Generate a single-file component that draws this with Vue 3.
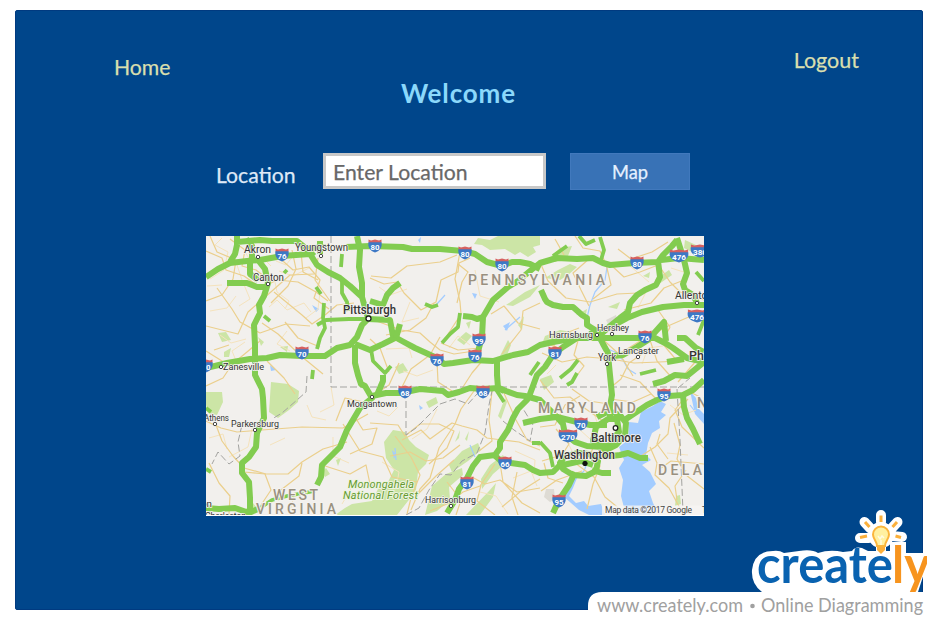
<script setup>
import { ref } from 'vue'

const location = ref('')

const parks = [
  'M474 244L478 238 490 240 498 236 540 236 540 245 533 247 536 252 528 257 520 252 515 255 505 249 490 250 482 245Z',
  'M560 248L572 246 568 256 556 262 545 262Z M545 278L558 270 570 264 577 267 568 275 560 280Z M545 336L560 330 572 332 556 342 542 344Z',
  'M206 392L222 392 223 402 217 415 208 413 206 405Z',
  'M271 382L288 384 299 391 298 402 289 410 278 418 269 412Z',
  'M393 430L405 432 409 440 416 447 429 455 426 464 418 472 416 490 408 501 397 515 335 515 345 508 352 504 372 501 378 489 387 484 394 470 386 458 384 442Z',
  'M449 465L462 451 478 443 481 450 468 461 452 472Z M481 479L490 465 503 455 507 462 493 474 482 489Z',
  'M425 515L432 486 446 474 462 468 463 475 449 487 450 500 437 511Z M466 515L489 491 496 483 493 497 480 515Z',
  'M426 402L436 397 438 403 429 408Z M498 416L505 398 507 402 501 419Z M455 442L460 430 459 438Z M465 439L469 431 467 441Z',
  'M218 333L226 332 231 340 222 342Z M258 337L264 342 261 346Z M224 352L231 348 229 357 224 357Z M280 347L288 346 287 352Z',
  'M457 340L466 332 472 336 464 345Z M395 367L403 363 408 371 399 374Z M466 323L471 321 469 329Z',
  'M500 356L508 340 511 345 505 360Z M506 305L525 292 540 285 530 297 513 306Z M518 325L524 316 522 330Z',
  'M676 496L680 495 681 504 675 506Z M540 379L551 375 554 382 544 390Z M685 240L696 245 692 252 684 248Z',
  'M655 280L669 270 672 275 659 284Z M576 315L587 309 586 314Z M608 307L620 302 617 309Z M643 276L650 272 649 278Z',
  'M242 512L253 503 260 512Z M322 472L326 468 330 474 325 477Z M336 460L341 458 338 466Z',
]

const water = [
  'M660 401L666 404 661 412 666 415 659 421 660 428 652 433 648 443 646 455 651 460 642 465 650 472 656 484 649 491 653 503 657 511 650 515 626 515 621 496 623 480 619 468 624 460 619 447 628 440 629 422 638 423 641 412 653 406Z',
  'M569 481L577 478 573 488 569 496 576 503 584 501 588 506 601 504 605 515 589 515 579 510 563 496Z',
  'M690 391L696 398 698 408 704 414 704 424 695 414Z',
  'M312 305L319 309 316 312Z M503 326L510 322 507 331Z M472 293L477 294 475 299Z M419 405L423 408 420 410Z',
  'M392 450L396 454 394 459Z M270 365L276 370 271 371Z M418 240L421 237 420 243Z',
]

const streams = [
  'M607 267L605 280 595 292 590 305 587 318 598 340 605 348 615 352 623 360 628 369 636 374',
  'M704 421L697 414 690 405 M571 483L584 471 586 466 M640 466L625 456 M664 394L653 404',
  'M505 330L520 317 M437 304L445 295 M470 445L475 457 M395 448L396 460',
]

const minorRoads = [
  'M206 251L222 258 226 270 244 276 261 288 277 280 298 282 316 292 328 301',
  'M210 236L217 252 236 260 233 279 222 295 206 301 M217 288L232 309 240 322 260 333 286 324 310 326',
  'M206 326L238 334 248 312 272 291 290 275 314 274 M230 239L245 250 242 266 256 270 269 280',
  'M274 292L302 315 312 324 325 315 337 305 354 303 M285 322L298 338 320 347',
  'M275 254L293 270 309 267 320 280 314 298 329 309 M292 250L296 269 288 286 271 303',
  'M301 252L303 272 318 280 M318 258L315 280 330 301 M214 350L229 345 M206 351L230 366 247 352 260 341',
  'M262 323L278 334 301 356 323 374 M267 361L284 378 295 394 M231 366L223 378 206 386',
  'M206 421L221 428 237 432 262 430 302 427 343 428 368 414',
  'M216 425L222 441 233 456 244 468 266 474 288 474 302 462 323 449 347 442',
  'M244 472L265 474 271 490 261 505 M209 463L219 483 230 496 229 514 M302 463L299 476 277 493',
  'M347 428L355 417 363 430 377 428 372 444 350 454 M322 465L350 474 366 465 370 484 382 490',
  'M336 421L345 398 364 402 M343 424L360 451 383 457 392 477 417 482',
  'M370 278L384 284 397 282 404 293 421 310 436 302 441 280 458 272 459 263 470 258',
  'M371 319L401 330 420 333 430 342 440 350 454 354 481 350 M386 335L410 330 426 318 434 303',
  'M460 252L455 279 460 302 461 314 443 342 M371 276L391 278 407 266 440 262 457 255',
  'M458 264L468 272 462 282 457 303 M491 314L504 306 518 323 540 329 M540 303L523 311 521 330 502 354',
  'M441 343L458 350 480 348 M402 387L411 369 430 355 440 337 M370 339L380 348 389 372',
  'M399 363L389 385 374 395 M437 361L438 382 452 391 M483 360L472 373 461 390',
  'M370 423L398 425 405 436 420 424 439 424 454 431 447 448 429 464',
  'M402 440L421 430 430 439 452 423 462 426 477 430 487 438 502 440 519 442 540 450',
  'M395 436L411 457 420 475 411 498 407 514 M390 456L410 452 426 461 443 458 460 445',
  'M474 391L461 409 455 424 439 448 430 478 420 489 411 510 M402 497L418 494 436 476 454 460',
  'M492 391L489 420 492 441 479 451 M503 391L516 420 527 440 540 446 M540 479L521 491 502 507',
  'M447 482L461 500 456 515 M470 476L485 484 500 480 517 492 540 488 M500 463L503 482 522 503 540 513',
  'M430 511L447 504 463 492 480 486 495 464 M481 485L477 501 495 515 M517 472L512 497 518 515',
  'M540 262L548 281 566 298 590 302 617 294 638 293 M575 236L583 248 600 251 606 264 611 285 593 299',
  'M589 306L581 290 573 273 590 258 M555 239L564 255 M618 249L631 259 652 252 668 242',
  'M612 266L624 277 640 272 658 265 M660 267L670 282 680 292 704 300 M624 310L651 303 664 288 684 280',
  'M579 337L574 355 584 366 578 374 M579 328L561 335 553 347 M598 335L621 356 633 376',
  'M542 353L562 362 587 357 611 359 634 363 659 362 680 361 M658 310L670 327 662 343 678 362',
  'M619 354L640 341 668 326 691 316 M650 340L657 361 673 379 M642 354L629 363 621 379 610 388',
  'M542 342L559 348 573 342 M540 380L554 398 570 397 583 407 603 421 M540 427L555 425 565 405 580 396',
  'M572 389L589 401 609 404 M610 399L633 402 651 394 M620 375L640 382 657 400',
  'M542 461L562 455 569 444 556 429 M544 463L548 478 563 483 M541 491L557 480 582 471',
  'M575 463L594 477 605 497 621 510 M596 439L590 456 600 466 593 484 587 509',
  'M641 456L655 447 668 434 670 418 688 399 M650 447L657 463 655 475 669 488 681 510',
  'M668 459L657 444 660 434 M674 423L680 445 677 459 686 475 704 489 M661 468L671 461 704 464',
  'M684 398L675 410 682 427 704 448 M690 392L700 397 M678 382L696 361 M686 470L675 486 677 500',
]

const detailRoads = [
  'M222 238L215 245 228 252 224 270 210 279 M237 265L242 280 250 299 239 306 M245 252L252 263 262 257 271 266',
  'M276 261L286 265 294 255 M279 271L293 276 309 268 M274 277L277 292 289 301 285 309',
  'M269 307L277 300 287 310 304 303 311 312 M287 331L277 344 290 351 M220 335L231 343 246 339',
  'M207 286L222 285 M210 311L227 308 236 296 M245 342L232 351 237 363 M306 318L318 309 320 292',
  'M209 438L223 434 227 449 M229 457L248 447 253 424 M270 445L285 438 M307 405L312 417 326 420',
  'M320 412L334 405 331 387 M333 437L333 456 349 463 M352 487L342 504 M294 496L290 511',
  'M379 287L390 295 407 289 M410 302L402 322 419 318 M475 270L480 296 499 302',
  'M433 370L417 376 403 371 M449 348L458 336 470 345 M386 349L409 348 412 358',
  'M377 411L389 416 398 407 M437 409L427 429 412 439 M382 462L399 472 396 488',
  'M515 451L535 460 534 475 M513 478L531 471 537 486 M480 492L496 496 508 514',
  'M630 266L649 282 M646 292L638 308 M671 268L690 274 M663 346L648 348 642 364 M556 365L547 374',
  'M670 405L683 415 696 410 M667 453L688 455 M569 445L573 453 M579 429L590 439 M593 411L599 427',
]

const highways = [
  'M206 277L218 269 230 263 247 261 260 260 282 256 310 254 317 265 328 272 340 278 350 286 362 297 368 318',
  'M237 236L237 245 235 254 230 262 M237 242L260 240 272 241 297 241 308 250 314 256',
  'M305 249L326 247 M346 247L370 246 403 247 412 249 440 249 463 251 475 254 487 262 502 266 512 262 520 262 530 264 540 269',
  'M227 283L247 283 257 287 267 287 M250 261L250 274 258 280',
  'M258 260L265 269 268 283 264 296 259 305 260 313 254 325 255 345 255 375 262 389 263 398 264 418 257 433 256 447 249 457 242 463 242 473 249 482 250 498 250 514',
  'M357 236L360 250 359 267 362 283 362 297 M320 241L320 254 M246 239L252 246 252 260',
  'M206 368L227 363 250 359 267 358 280 355 301 356 317 356 325 356 337 348 350 345 357 337 362 325 368 319',
  'M355 345L355 354 355 363 358 375 361 384 365 386 372 398 360 408 347 430 340 447 329 458 322 465 321 477 317 485',
  'M355 344L370 350 383 344 395 338 M368 319L390 320 393 336 402 341 415 348 437 358 444 364 453 363 473 360 493 361 513 355 528 352 540 345 553 342 577 338 637 338 655 338 665 343 673 348 687 358 704 362',
  'M370 301L383 305 387 295 393 288 400 283 M396 338L400 324',
  'M477 355L482 337 483 317 493 300 508 287 518 281 530 271 540 263 557 258 577 259 593 258 603 263 610 265 634 263 658 262 663 255 672 246 677 240 M661 260L679 258 704 260',
  'M463 316L472 317 477 319 484 317',
  'M658 261L660 277 656 285 645 290 637 295 630 303 628 312 620 318 610 326 600 335',
  'M589 334L600 333 614 325 627 318 642 312 663 307 684 305 704 305',
  'M541 290L545 299 547 302 553 305 563 307 573 307 582 315 587 318 587 325 600 333',
  'M677 238L684 260 687 273 683 284 685 290 693 295 697 303',
  'M600 338L603 344 608 353 609 365 610 375 612 395 610 406 610 418',
  'M608 359L614 356 623 355 637 347 648 340 664 322 666 341 M677 338L685 338 696 348 704 352 M667 362L684 359',
  'M600 334L577 338 563 347 553 355 545 367 537 375 530 394 527 400 518 409 513 418 508 430 500 442 500 448 495 455 480 457 473 466 467 478 459 489 455 500 447 513',
  'M372 396L386 393 401 393 420 389 443 391 448 395 459 392 470 388 482 389 499 388 506 391 517 395 525 396 540 400 557 417',
  'M377 395L383 381 383 375 M497 361L497 375 498 388 504 391',
  'M493 454L501 461 511 463 525 465 533 470 540 473 553 472 562 463',
  'M523 423L540 419 557 417 573 421 590 425 607 425 M556 416L563 424 565 434 575 442 587 446 603 447',
  'M597 417L609 411 620 415 626 423 625 435 616 445 602 446 593 441 596 427 608 419 617 419 619 432 610 442',
  'M616 445L600 453 592 461 M626 419L638 411 647 405 657 400 669 396 683 395 693 390 704 380',
  'M683 395L684 407 687 418 693 429 700 444 M653 384L664 381 675 375 687 376 704 362',
  'M597 456L611 456 620 455 628 453 640 458 648 458 M592 470L602 473 611 473',
  'M564 457L577 453 589 454 598 461 596 471 586 476 573 475 563 469 560 463Z M575 472L569 485 559 500 553 513 M563 465L581 461 593 465',
  'M206 508L219 509 235 508 249 513 260 508',
]

const connectors = [
  'M260 508L272 500 287 496 315 491 M317 325L326 320 349 319 367 319 M324 303L323 318 325 328 320 338 317 349 M313 370L312 379',
  'M342 254L341 267 M342 280L342 293 347 302 348 311 M560 378L571 369 578 360 M640 374L656 370',
  'M460 313L458 327 450 334 442 343 M425 304L432 307 438 305 M371 349L373 361 385 373 391 366',
  'M206 408L211 412 M206 469L211 472 M316 287L321 294 M264 316L270 321 M284 273L287 270 M553 256L567 246 M579 236L586 244 595 240',
  'M530 375L539 362 M540 442L550 453 553 467 M704 281L696 272 M704 320L698 335',
  'M495 388L504 402 M567 385L572 382 577 373 M532 443L540 443 M600 237L604 250 601 260',
]

const borders = [
  'M331 236V387H704', 'M406 391V435L416 428 430 414 440 404 455 399 468 404 477 394',
  'M307 376L306 392 297 400 282 413 272 419', 'M242 425L238 442 240 456 229 464 218 452 212 464',
  'M406 515L419 508 429 490 440 474 451 475 462 461 477 453 485 433 489 405 492 391',
  'M503 421L514 430 530 441 533 425 522 407', 'M677 389L680 440 683 512', 'M678 388L690 378',
]

const shields = [
  [282, 255, '76'], [375, 246, '80'], [465, 253, '80'], [502, 265, '80'], [637, 263, '80'],
  [679, 256, '476'], [700, 251, '380'], [302, 353, '70'], [206, 366, '70'], [479, 340, '99'],
  [475, 356, '76'], [437, 360, '76'], [645, 337, '76'], [555, 353, '81'], [697, 316, '476'],
  [405, 392, '68'], [483, 392, '68'], [505, 463, '66'], [467, 483, '81'], [581, 424, '70'],
  [568, 436, '270'], [664, 395, '95'], [559, 501, '95'],
].map(([x, y, label]) => ({ x, y, label, stretch: label.length > 2 ? 1.4 : 1 }))

const cities = [
  [244, 253, 27, 'Akron', 10], [295, 251, 53, 'Youngstown', 10], [253, 281, 31, 'Canton', 10],
  [223, 370, 41, 'Zanesville', 9.5], [204, 421, 25, 'Athens', 9], [231, 427, 48, 'Parkersburg', 9],
  [347, 407, 50, 'Morgantown', 9.5], [425, 503, 51, 'Harrisonburg', 9.5], [549, 338, 44, 'Harrisburg', 9.5],
  [597, 331, 32, 'Hershey', 9], [618, 354, 41, 'Lancaster', 9.5], [598, 361, 18, 'York', 10],
  [675, 299, 46, 'Allentown', 10.5], [205, 519, 41, 'Charleston', 9], [198, 507, 14, 'ton', 9],
]
const majorCities = [
  [343, 314, 53, 'Pittsburgh'], [591, 442, 50, 'Baltimore'], [554, 459, 61, 'Washington'], [689, 360, 68, 'Philadelphia'],
]
const regions = [
  [468, 285, 137, 'PENNSYLVANIA'], [538, 413, 98, 'MARYLAND'], [273, 500, 45, 'WEST'],
  [256, 514, 80, 'VIRGINIA'], [658, 475, 95, 'DELAWARE'], [697, 408, 55, 'NEW J'],
]
const markers = [[258, 257], [321, 256], [268, 284], [221, 367], [215, 424], [255, 430], [372, 397], [451, 506], [597, 335], [612, 334], [638, 357], [607, 364], [697, 303]]
</script>

<template>
  <main class="page">
    <section class="panel">
      <header class="header">
        <a class="nav home">Home</a>
        <h1 class="title">Welcome</h1>
        <a class="nav logout">Logout</a>
      </header>

      <form class="search" @submit.prevent>
        <label class="label" for="location">Location</label>
        <input id="location" v-model="location" class="field" placeholder="Enter Location" />
        <button class="map-button" type="submit">Map</button>
      </form>

      <svg class="map" viewBox="206 236 498 280">
        <rect class="land" x="206" y="236" width="498" height="280" />
        <path v-for="d in parks" :key="d" class="park" :d="d" />
        <path v-for="d in water" :key="d" class="water" :d="d" />
        <path v-for="d in streams" :key="d" class="stream" :d="d" />
        <path class="urban" d="M546 489L554 489 555 499 550 502 544 497Z M606 320L616 315 617 319 608 324Z" />
        <path v-for="d in detailRoads" :key="d" class="detail" :d="d" />
        <path v-for="d in minorRoads" :key="d" class="minor" :d="d" />
        <path v-for="d in borders" :key="d" class="border" :d="d" />
        <path v-for="d in connectors" :key="d" class="connector" :d="d" />
        <path v-for="d in highways" :key="d" class="highway" :d="d" />

        <g v-for="(s, i) in shields" :key="i" :transform="`translate(${s.x} ${s.y}) scale(${s.stretch} 1)`">
          <path class="shield-body" d="M-6.5-4H6.5C7.5 1 5 5 0 6.5C-5 5-7.5 1-6.5-4Z" />
          <path class="shield-top" d="M-6.5-6.5L-4-5.5 0-6.5 4-5.5 6.5-6.5V-3.800H-6.5Z" />
          <text class="shield-text" y="3.6" :textLength="s.stretch > 1 ? 10 : 9" lengthAdjust="spacingAndGlyphs">{{ s.label }}</text>
        </g>

        <text v-for="[x, y, w, name] in regions" :key="name" class="region" :x="x" :y="y" :textLength="w">{{ name }}</text>
        <text class="forest" x="348" y="488" textLength="66">Monongahela</text>
        <text class="forest" x="343" y="499" textLength="75">National Forest</text>
        <circle v-for="([x, y], i) in markers" :key="i" class="marker" :cx="x" :cy="y" r="1.7" />
        <circle class="marker major" cx="368.5" cy="318.5" r="2.5" />
        <circle class="marker major" cx="615.5" cy="428" r="2.3" />
        <circle class="marker capital" cx="585" cy="463.5" r="2.2" />
        <text v-for="[x, y, w, name, size] in cities" :key="name" class="city" :x="x" :y="y" :textLength="w" lengthAdjust="spacingAndGlyphs" :font-size="size">{{ name }}</text>
        <text v-for="[x, y, w, name] in majorCities" :key="name" class="major-city" :x="x" :y="y" :textLength="w" lengthAdjust="spacingAndGlyphs">{{ name }}</text>
        <rect class="credit-bg" x="602" y="505.5" width="102" height="10.5" />
        <text class="credit" x="605" y="513" textLength="87">Map data ©2017 Google</text>
        <text class="credit" x="702" y="513">T</text>
        <rect class="edge" x="206" y="515" width="498" height="1" />
      </svg>
    </section>

    <footer class="brand">
      <svg viewBox="580 500 347 119" width="347" height="119">
        <path class="halo" d="M588 619V606Q588 592 602 592H762Q751 584 752 570Q754 551 773 551Q779 550 784 553L799 551Q812 549 818 553Q830 549 843 552L852 551Q855 546 862 548L868 551H890V542H906V553H927V564L918 592H923V619Z" />
        <g class="halo-strokes">
          <path d="M881 515V522M864.500 522L870 528M897.500 522L892 528M860 538H869M902 537L892 536" />
          <circle cx="881" cy="535" r="8" />
          <path d="M881 540V552" />
        </g>
        <text class="wordmark blue" x="757" y="583" textLength="136" lengthAdjust="spacingAndGlyphs">create</text>
        <text class="wordmark orange" x="892" y="583" textLength="38" lengthAdjust="spacingAndGlyphs">ly</text>
        <path class="rays" d="M881 515.500V522M865 522L869.500 527M897 522L892.500 527M860 537.500L867 536M895.500 536L901 537.500" />
        <path class="bulb" d="M877 546C877 541 873 539 873 534.500A8 8 0 0 1 889 534.500C889 539 885 541 885 546Z" />
        <path class="filament" d="M878 536L880 539 882 536 884 538M881 540V545" />
        <path class="bulb-base" d="M877 547H885V550L881 554 877 550Z" />
        <text class="tagline" x="597" y="612" textLength="146" lengthAdjust="spacingAndGlyphs">www.creately.com</text>
        <circle class="dot" cx="752.500" cy="606" r="2.300" />
        <text class="tagline" x="761" y="612" textLength="162" lengthAdjust="spacingAndGlyphs">Online Diagramming</text>
      </svg>
    </footer>
  </main>
</template>

<style>
body {
  margin: 0;
  background: #fff;
}
</style>

<style scoped>
.page {
  position: relative;
  box-sizing: border-box;
  width: 927px;
  height: 619px;
  padding: 10px 4px 9px 15px;
  overflow: hidden;
  background: #fff;
  font-family: Lato, "Open Sans", sans-serif;
}
.panel {
  box-sizing: border-box;
  height: 600px;
  border: 1px solid #003a80;
  border-radius: 2px;
  background: #00468b;
}
.header {
  display: grid;
  grid-template-columns: 200px 1fr 200px;
  box-sizing: border-box;
  height: 142px;
  padding: 37px 63px 0 98px;
  align-items: start;
}
.nav {
  color: #d9dfae;
  font-size: 21.5px;
  line-height: 24px;
  -webkit-text-stroke: 0.25px #d9dfae;
}
.home {
  margin-top: 7px;
  font-size: 21.2px;
}
.logout {
  text-align: right;
}
.title {
  margin: 29px 0 0 -56px;
  color: #8bd8fb;
  font-size: 26px;
  font-weight: 700;
  letter-spacing: 0.85px;
  line-height: 32px;
  text-align: center;
}
.search {
  display: flex;
  align-items: flex-start;
  height: 83px;
  padding-left: 200px;
}
.label {
  width: 107px;
  padding-top: 8px;
  color: #dfe9f7;
  font-size: 21.2px;
  line-height: 28px;
  -webkit-text-stroke: 0.25px #dfe9f7;
}
.field {
  box-sizing: border-box;
  width: 223px;
  height: 36px;
  margin-right: 24px;
  padding: 1px 7px 0;
  border: 3px solid #c8c8c8;
  background: #fff;
  color: #666;
  font: 21.2px Lato, sans-serif;
}
.field::placeholder {
  color: #686868;
  opacity: 1;
  -webkit-text-stroke: 0.25px #686868;
}
.map-button {
  width: 120px;
  height: 37px;
  padding: 0;
  border: 1px solid #4179bd;
  background: #3872b6;
  color: #e5f0ff;
  font: 18.3px Lato, sans-serif;
  -webkit-text-stroke: 0.25px #e5f0ff;
}
.map {
  display: block;
  width: 498px;
  height: 280px;
  margin-left: 190px;
  font-family: Roboto, sans-serif;
}
.land { fill: #f2f0ed; }
.park { fill: #cce5a6; }
.water { fill: #a3ccff; }
.urban { fill: #dedbd4; }
.stream, .detail, .minor, .border, .connector, .highway {
  fill: none;
  stroke-linejoin: round;
}
.stream { stroke: #a3ccff; stroke-width: 1.2; }
.detail { stroke: #f5e3bd; stroke-width: 1; }
.minor { stroke: #ebcf8c; stroke-width: 1.2; }
.border { stroke: #a3a3a0; stroke-width: 1; stroke-dasharray: 7 3; }
.connector { stroke: #82cc50; stroke-width: 3.8; }
.highway { stroke: #82cc50; stroke-width: 6; }
.shield-body { fill: #3d78c5; }
.shield-top { fill: #d66060; }
.shield-text {
  fill: #fff;
  font-size: 8px;
  font-weight: 700;
  text-anchor: middle;
}
.region {
  fill: #999080;
  stroke: #f5f3ef;
  stroke-width: 2;
  paint-order: stroke;
  font-size: 14px;
  font-weight: 500;
}
.forest {
  fill: #659b31;
  stroke: #edf4df;
  stroke-width: 2;
  paint-order: stroke;
  font-size: 11px;
  font-style: italic;
}
.city, .major-city {
  fill: #333;
  stroke: #f5f3ef;
  stroke-width: 1.5;
  paint-order: stroke;
}
.major-city {
  font-size: 12px;
  font-weight: 500;
}
.marker { fill: #fff; stroke: #444; stroke-width: 1; }
.major { stroke: #222; stroke-width: 1.3; }
.capital { fill: #111; stroke: #111; }
.credit-bg { fill: #f6f5f2; opacity: .8; }
.credit { fill: #444; font-size: 8.5px; }
.edge { fill: #fff; }
.brand {
  position: absolute;
  right: 0;
  bottom: 0;
  width: 347px;
  height: 119px;
}
.brand svg { display: block; }
.halo { fill: #fff; }
.halo-strokes { fill: #fff; stroke: #fff; stroke-width: 10; stroke-linecap: round; }
.wordmark { font-size: 52px; font-weight: 700; }
.blue { fill: #0962b0; }
.orange { fill: #f7941e; }
.rays { fill: none; stroke: #fbb03b; stroke-width: 3; }
.bulb { fill: #fff0a0; stroke: #fbb53b; stroke-width: 2; }
.filament { fill: none; stroke: #fffbe0; stroke-width: 1.5; }
.bulb-base { fill: #fbb03b; }
.tagline { fill: #a0a0a0; font-size: 19px; }
.dot { fill: #a0a0a0; }
</style>
